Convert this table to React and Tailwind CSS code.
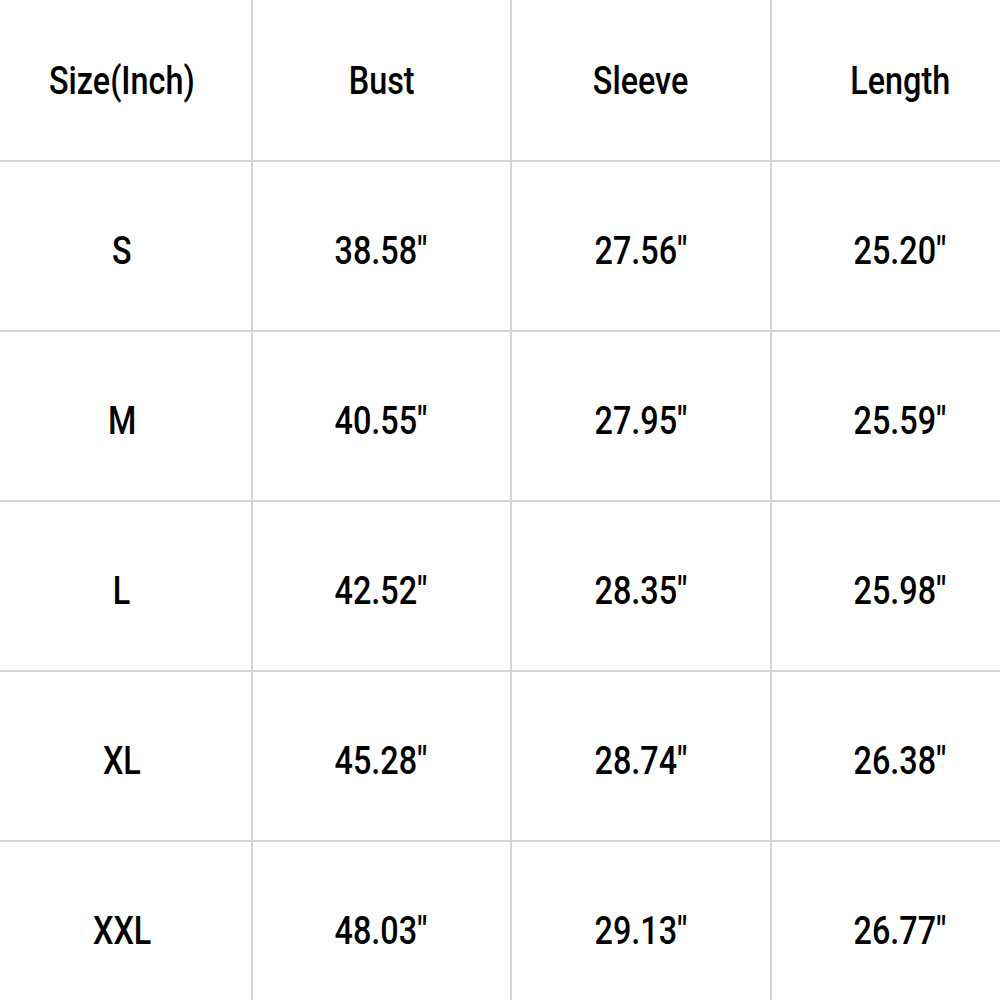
import React from "react";

const headers = ["Size(Inch)", "Bust", "Sleeve", "Length"];

const rows = [
  ["S", "38.58\"", "27.56\"", "25.20\""],
  ["M", "40.55\"", "27.95\"", "25.59\""],
  ["L", "42.52\"", "28.35\"", "25.98\""],
  ["XL", "45.28\"", "28.74\"", "26.38\""],
  ["XXL", "48.03\"", "29.13\"", "26.77\""],
];

const Cell = ({ text }) => (
  <div className="h-[170px] border-r-2 border-b-2 border-[#d4d4d4] flex items-center justify-center">
    <span className="text-[39px] font-medium text-black scale-x-[0.83] leading-none pt-[10px]">{text}</span>
  </div>
);

const App = () => {
  return (
    <div className="w-[1000px] h-[1000px] overflow-hidden bg-white" style={{ fontFamily: "Roboto, 'Liberation Sans', sans-serif" }}>
      <div className="w-[1038px] ml-[-7px] mt-[-8px] grid grid-cols-4">
        {headers.map((h) => (
          <Cell key={h} text={h} />
        ))}
        {rows.map((row) => row.map((v, i) => <Cell key={row[0] + i} text={v} />))}
      </div>
    </div>
  );
};

export default App;
